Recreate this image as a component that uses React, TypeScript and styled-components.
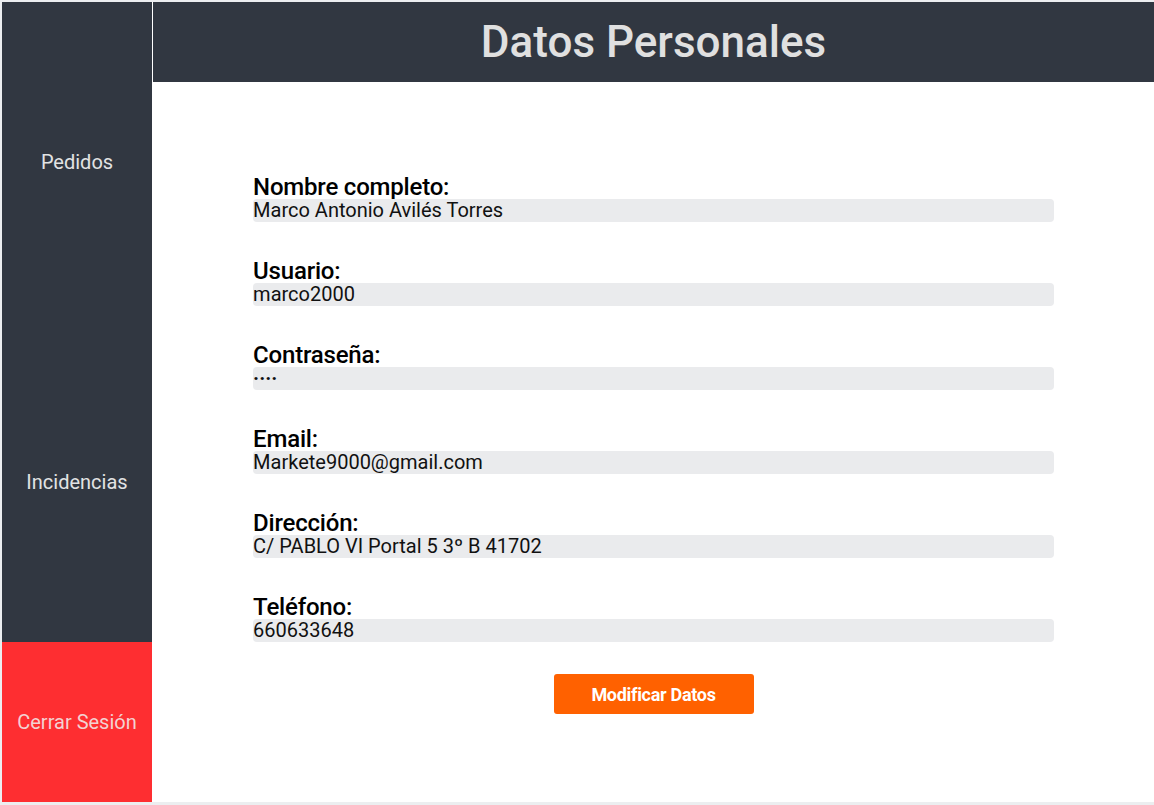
import React from "react";
import styled, { createGlobalStyle } from "styled-components";

const GlobalStyle = createGlobalStyle`
  html, body {
    margin: 0;
    padding: 0;
    background: #eceef0;
    font-family: Roboto, "Liberation Sans", Arial, sans-serif;
  }
  * { box-sizing: border-box; }
`;

const Shell = styled.div`
  display: flex;
  padding: 2px 0 3px 2px;
  height: 805px;
  background: #eceef0;
`;

const Sidebar = styled.nav`
  width: 150px;
  display: flex;
  flex-direction: column;
  background: #313741;
`;

const NavItem = styled.a<{ $h: number; $danger?: boolean }>`
  height: ${(p) => p.$h}px;
  display: flex;
  align-items: center;
  justify-content: center;
  font-size: 20px;
  color: ${(p) => (p.$danger ? "#f3d2d2" : "#e2e3e4")};
  background: ${(p) => (p.$danger ? "#fe2e31" : "transparent")};
  text-decoration: none;
  cursor: pointer;
`;

const Main = styled.main`
  flex: 1;
  display: flex;
  flex-direction: column;
  background: #ffffff;
  padding-left: 1px;
`;

const Header = styled.header`
  height: 80px;
  background: #313741;
  display: flex;
  align-items: center;
  justify-content: center;
`;

const Title = styled.h1`
  margin: 0;
  font-size: 44px;
  font-weight: 500;
  color: #e0e0e0;
`;

const Form = styled.section`
  width: 80%;
  margin: 0 auto;
  padding-top: 93px;
  display: flex;
  flex-direction: column;
  gap: 37px;
`;

const Field = styled.div`
  display: flex;
  flex-direction: column;
`;

const Label = styled.label`
  font-size: 24px;
  line-height: 24px;
  font-weight: 500;
  color: #000;
  letter-spacing: -0.2px;
`;

const Value = styled.div<{ $secret?: boolean }>`
  height: 23px;
  line-height: 23px;
  font-size: 20px;
  color: #111;
  background: #eaebed;
  border-radius: 4px;
  font-weight: ${(p) => (p.$secret ? 700 : 400)};
`;

const Actions = styled.div`
  display: flex;
  justify-content: center;
  padding-top: 32px;
`;

const Button = styled.button`
  width: 200px;
  height: 40px;
  border: none;
  border-radius: 3px;
  background: #ff6100;
  color: #fff;
  font-family: Roboto, "Liberation Sans", Arial, sans-serif;
  font-size: 18px;
  font-weight: 700;
  letter-spacing: -0.3px;
  cursor: pointer;
`;

const fields: { label: string; value: string; secret?: boolean }[] = [
  { label: "Nombre completo:", value: "Marco Antonio Avilés Torres" },
  { label: "Usuario:", value: "marco2000" },
  { label: "Contraseña:", value: "····", secret: true },
  { label: "Email:", value: "Markete9000@gmail.com" },
  { label: "Dirección:", value: "C/ PABLO VI Portal 5 3º B 41702" },
  { label: "Teléfono:", value: "660633648" },
];

export default function App() {
  return (
    <>
      <GlobalStyle />
      <Shell>
        <Sidebar>
          <NavItem $h={320}>Pedidos</NavItem>
          <NavItem $h={320}>Incidencias</NavItem>
          <NavItem $h={160} $danger>
            Cerrar Sesión
          </NavItem>
        </Sidebar>
        <Main>
          <Header>
            <Title>Datos Personales</Title>
          </Header>
          <Form>
            {fields.map((f) => (
              <Field key={f.label}>
                <Label>{f.label}</Label>
                <Value $secret={f.secret}>{f.value}</Value>
              </Field>
            ))}
          </Form>
          <Actions>
            <Button>Modificar Datos</Button>
          </Actions>
        </Main>
      </Shell>
    </>
  );
}
